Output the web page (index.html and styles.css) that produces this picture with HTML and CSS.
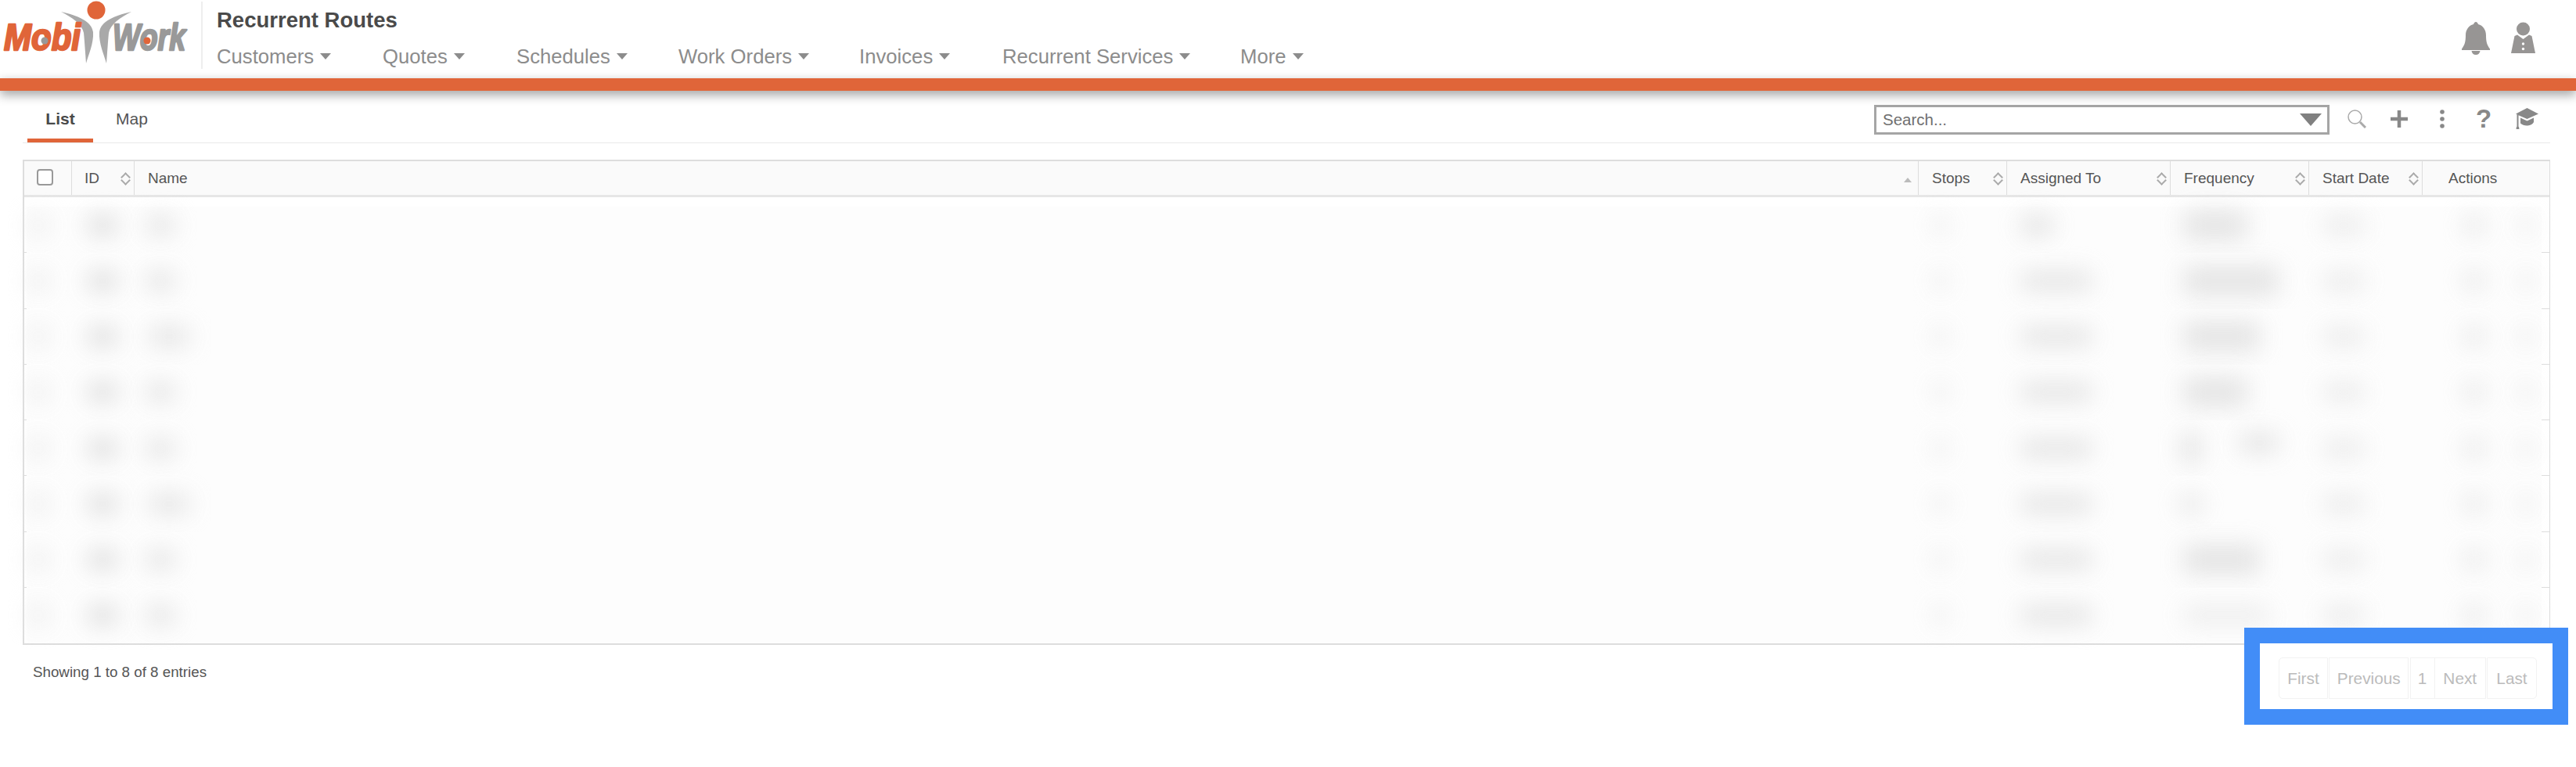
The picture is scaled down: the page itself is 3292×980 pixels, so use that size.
FILE: index.html
```html
<!DOCTYPE html>
<html lang="en">
<head>
<meta charset="utf-8">
<title>Recurrent Routes</title>
<link rel="stylesheet" href="styles.css">
</head>
<body>
<header class="topbar">
  <svg class="logo" viewBox="0 0 240 84" aria-label="MobiWork">
    <path class="logo-body" d="M78 15C100 20 117 27 119 41C120 55 113 70 110 81C109 68 108 52 107 42C105 31 92 22 78 15Z"/>
    <path class="logo-body" d="M168 15C146 20 129 27 127 41C126 55 133 70 136 81C137 68 138 52 139 42C141 31 154 22 168 15Z"/>
    <circle class="logo-head" cx="123" cy="13" r="11.5"/>
    <text class="logo-word logo-mobi" x="5" y="64" textLength="98" lengthAdjust="spacingAndGlyphs">Mobi</text>
    <text class="logo-word logo-work" x="144" y="64" textLength="93" lengthAdjust="spacingAndGlyphs">Work</text>
    <circle class="logo-dot-grey" cx="57" cy="52" r="4.500"/>
    <circle class="logo-dot-orange" cx="188" cy="52" r="4.500"/>
  </svg>
  <div class="title-block">
    <h1 class="page-title">Recurrent Routes</h1>
    <nav class="main-nav">
      <a class="nav-item nav-customers">Customers<i class="caret"></i></a>
      <a class="nav-item nav-quotes">Quotes<i class="caret"></i></a>
      <a class="nav-item nav-schedules">Schedules<i class="caret"></i></a>
      <a class="nav-item nav-orders">Work Orders<i class="caret"></i></a>
      <a class="nav-item nav-invoices">Invoices<i class="caret"></i></a>
      <a class="nav-item nav-services">Recurrent Services<i class="caret"></i></a>
      <a class="nav-item">More<i class="caret"></i></a>
    </nav>
  </div>
  <div class="top-icons">
    <svg class="bell" viewBox="0 0 36 42"><path d="M18 0C19.500 0 20.500 1.500 21 3C27 4.500 31 10 31 17C31 25 32 29 36 34.500V36H0V34.500C4 29 5 25 5 17C5 10 9 4.500 15 3C15.500 1.500 16.500 0 18 0Z"/><path d="M12.500 37H23.500C23 40 21 42 18 42C15 42 13 40 12.500 37Z"/></svg>
    <svg class="person" viewBox="0 0 31 41"><circle cx="15.500" cy="9" r="8.500"/><path d="M4.500 18L8 16.500L15.500 22L23 16.500L26.500 18L31 40H0Z"/><circle class="person-button" cx="15.500" cy="28" r="1.700"/><circle class="person-button" cx="15.500" cy="34.500" r="1.700"/></svg>
  </div>
</header>
<div class="accent-bar"></div>

<main class="content">
  <div class="toolbar">
    <div class="tabs">
      <a class="tab tab-active">List</a>
      <a class="tab">Map</a>
    </div>
    <div class="tools">
      <div class="search-box"><span class="search-text">Search...</span><i class="search-arrow"></i></div>
      <svg class="tool tool-search" viewBox="0 0 24 24"><circle cx="9.500" cy="9.500" r="8.500"/><path class="handle" d="M16 16L23 23"/></svg>
      <svg class="tool tool-plus" viewBox="0 0 24 24"><path d="M12 1V23M1 12H23"/></svg>
      <svg class="tool tool-dots" viewBox="0 0 8 24"><circle cx="4" cy="3" r="2.800"/><circle cx="4" cy="12" r="2.800"/><circle cx="4" cy="21" r="2.800"/></svg>
      <span class="tool-question">?</span>
      <svg class="tool tool-cap" viewBox="0 0 29 27"><path d="M14.500 0L29 7.500L14.500 14L3.500 9.200V24H1.500V8L0 7.500Z"/><path d="M6 12.500L14.500 16.500L23 12.500V18C21 21.500 17.500 22.500 14 22.500C11 22.500 8 21.500 6 19.500Z"/><path d="M1 24H4L4.500 27H0.500Z"/></svg>
    </div>
  </div>

  <section class="data-table">
    <div class="row head-row">
      <div class="cell head"><span class="check"></span></div>
      <div class="cell head">ID<i class="sort"></i></div>
      <div class="cell head">Name<i class="sort-asc"></i></div>
      <div class="cell head">Stops<i class="sort"></i></div>
      <div class="cell head">Assigned To<i class="sort"></i></div>
      <div class="cell head">Frequency<i class="sort"></i></div>
      <div class="cell head">Start Date<i class="sort"></i></div>
      <div class="cell head head-actions">Actions</div>
    </div>

    <div class="row body-row"><div class="cell"><i class="smear s-check"></i></div><div class="cell"><i class="smear s-id"></i></div><div class="cell"><i class="smear s-name"></i></div><div class="cell"><i class="smear s-stops"></i></div><div class="cell"><i class="smear s-short"></i></div><div class="cell"><i class="smear s-freq s-freq-1"></i></div><div class="cell"><i class="smear s-date"></i></div><div class="cell"><i class="smear s-act"></i><i class="smear s-act2"></i></div></div>
    <div class="row body-row"><div class="cell"><i class="smear s-check"></i></div><div class="cell"><i class="smear s-id"></i></div><div class="cell"><i class="smear s-name"></i></div><div class="cell"><i class="smear s-stops"></i></div><div class="cell"><i class="smear s-long"></i></div><div class="cell"><i class="smear s-freq s-freq-2"></i></div><div class="cell"><i class="smear s-date"></i></div><div class="cell"><i class="smear s-act"></i><i class="smear s-act2"></i></div></div>
    <div class="row body-row"><div class="cell"><i class="smear s-check"></i></div><div class="cell"><i class="smear s-id"></i></div><div class="cell"><i class="smear s-name-wide"></i></div><div class="cell"><i class="smear s-stops"></i></div><div class="cell"><i class="smear s-long"></i></div><div class="cell"><i class="smear s-freq s-freq-3"></i></div><div class="cell"><i class="smear s-date"></i></div><div class="cell"><i class="smear s-act"></i><i class="smear s-act2"></i></div></div>
    <div class="row body-row"><div class="cell"><i class="smear s-check"></i></div><div class="cell"><i class="smear s-id"></i></div><div class="cell"><i class="smear s-name"></i></div><div class="cell"><i class="smear s-stops"></i></div><div class="cell"><i class="smear s-long"></i></div><div class="cell"><i class="smear s-freq s-freq-1"></i></div><div class="cell"><i class="smear s-date"></i></div><div class="cell"><i class="smear s-act"></i><i class="smear s-act2"></i></div></div>
    <div class="row body-row"><div class="cell"><i class="smear s-check"></i></div><div class="cell"><i class="smear s-id"></i></div><div class="cell"><i class="smear s-name"></i></div><div class="cell"><i class="smear s-stops"></i></div><div class="cell"><i class="smear s-long"></i></div><div class="cell"><i class="smear s-split-a"></i><i class="smear s-split-b"></i></div><div class="cell"><i class="smear s-date"></i></div><div class="cell"><i class="smear s-act"></i><i class="smear s-act2"></i></div></div>
    <div class="row body-row"><div class="cell"><i class="smear s-check"></i></div><div class="cell"><i class="smear s-id"></i></div><div class="cell"><i class="smear s-name-wide"></i></div><div class="cell"><i class="smear s-stops"></i></div><div class="cell"><i class="smear s-long"></i></div><div class="cell"><i class="smear s-freq-thin"></i></div><div class="cell"><i class="smear s-date"></i></div><div class="cell"><i class="smear s-act"></i><i class="smear s-act2"></i></div></div>
    <div class="row body-row"><div class="cell"><i class="smear s-check"></i></div><div class="cell"><i class="smear s-id"></i></div><div class="cell"><i class="smear s-name"></i></div><div class="cell"><i class="smear s-stops"></i></div><div class="cell"><i class="smear s-long"></i></div><div class="cell"><i class="smear s-freq s-freq-3"></i></div><div class="cell"><i class="smear s-date"></i></div><div class="cell"><i class="smear s-act"></i><i class="smear s-act2"></i></div></div>
    <div class="row body-row"><div class="cell"><i class="smear s-check"></i></div><div class="cell"><i class="smear s-id"></i></div><div class="cell"><i class="smear s-name"></i></div><div class="cell"><i class="smear s-stops"></i></div><div class="cell"><i class="smear s-long"></i></div><div class="cell"><i class="smear s-freq-faint"></i></div><div class="cell"><i class="smear s-date"></i></div><div class="cell"><i class="smear s-act"></i><i class="smear s-act2"></i></div></div>
  </section>

  <footer class="table-footer">
    <div class="entries">Showing 1 to 8 of 8 entries</div>
    <div class="highlight">
      <div class="pager">
        <a class="page page-first">First</a>
        <a class="page page-prev">Previous</a>
        <a class="page page-num">1</a>
        <a class="page page-next">Next</a>
        <a class="page page-last">Last</a>
      </div>
    </div>
  </footer>
</main>
</body>
</html>
```

FILE: styles.css
```css
* { box-sizing: border-box; }
html, body { margin: 0; padding: 0; background: #fff; }
body { width: 3292px; height: 980px; overflow: hidden; font-family: "Liberation Sans", Arial, sans-serif; color: #555; }
i { font-style: normal; }

.topbar { height: 100px; display: flex; align-items: flex-start; background: #fff; }
.logo { width: 240px; height: 84px; flex: none; overflow: visible; }
.logo-body { fill: #a9a9a9; }
.logo-head { fill: #e06539; }
.logo-word { font-family: "Liberation Sans", sans-serif; font-weight: 700; font-style: italic; font-size: 48px; stroke-width: 2.500px; stroke-linejoin: round; }
.logo-mobi { fill: #e06539; stroke: #e06539; }
.logo-work { fill: #999; stroke: #999; }
.logo-dot-grey { fill: #999; }
.logo-dot-orange { fill: #e06539; }

.title-block { margin: 2px 0 0 17px; padding: 11px 0 0 18px; height: 86px; border-left: 2px solid #eee; }
.page-title { margin: 0; font-size: 27.500px; line-height: 26px; font-weight: 700; color: #4a4a4a; }
.main-nav { display: flex; margin-top: 19px; }
.nav-item { font-size: 25.700px; line-height: 28px; color: #8c8c8c; display: flex; align-items: center; white-space: nowrap; }
.caret { width: 0; height: 0; margin-left: 8px; border-left: 7.500px solid transparent; border-right: 7.500px solid transparent; border-top: 8px solid #8c8c8c; }
.nav-customers { width: 212px; }
.nav-quotes { width: 171px; }
.nav-schedules { width: 207px; }
.nav-orders { width: 231px; }
.nav-invoices { width: 183px; }
.nav-services { width: 304px; }

.top-icons { margin-left: auto; margin-right: 52px; margin-top: 28px; display: flex; gap: 27px; }
.bell { width: 36px; height: 42px; fill: #979594; }
.person { width: 31px; height: 41px; fill: #979594; }
.person-button { fill: #fff; }

.accent-bar { height: 16px; background: #e06539; box-shadow: 0 5px 14px rgba(0, 0, 0, .38); position: relative; }

.content { padding: 0 33px 0 29px; }
.toolbar { height: 67px; display: flex; justify-content: space-between; border-bottom: 1px solid #eaeaea; }
.tabs { display: flex; padding-left: 6px; }
.tab { font-size: 21px; line-height: 24px; padding: 24px 0 0; color: #555; }
.tab-active { width: 84px; text-align: center; margin-right: 29px; font-weight: 700; color: #4a4a4a; border-bottom: 5px solid #e06539; }

.tools { display: flex; align-items: flex-start; padding: 18px 15px 0 0; }
.search-box { width: 582px; height: 38px; border: 3px solid #a5a5a5; display: flex; align-items: center; justify-content: space-between; padding: 0 7px 0 8px; }
.search-text { font-size: 20.500px; color: #6f6f6f; }
.search-arrow { width: 0; height: 0; border-left: 14px solid transparent; border-right: 14px solid transparent; border-top: 16px solid #808080; }
.tool { flex: none; }
.tool-search { width: 24px; height: 24px; margin: 6px 0 0 23px; fill: none; stroke: #aaa; stroke-width: 1.500; }
.tool-search .handle { stroke-width: 3; }
.tool-plus { width: 24px; height: 24px; margin: 6px 0 0 30px; fill: none; stroke: #888; stroke-width: 4.500; }
.tool-dots { width: 8px; height: 24px; margin: 6px 0 0 39px; fill: #888; }
.tool-question { width: 20px; margin: 0 0 0 39px; font-size: 33px; line-height: 36px; font-weight: 700; color: #888; text-align: center; }
.tool-cap { width: 29px; height: 27px; margin: 4px 0 0 31px; fill: #888; }

.data-table { margin-top: 21px; width: 3230px; border: 1px solid #ddd; border-top-width: 2px; border-bottom-width: 2px; border-left-width: 2px; position: relative; }
.row { display: grid; grid-template-columns: 61px 80px 2280px 113px 209px 177px 145px 1fr; }
.head-row { height: 46px; background: #fafafa; border-bottom: 3px solid #e6e6e6; }
.cell { position: relative; display: flex; align-items: center; }
.head { padding-left: 17px; font-size: 19px; color: #555; border-right: 1px solid #ddd; }
.head:last-child { border-right: 0; }
.head-actions { padding-left: 33px; }
.head:first-child, .head:nth-child(2) { padding-left: 16px; }
.check { width: 21px; height: 21px; margin-top: -2px; border: 2px solid #999; border-radius: 4px; background: #fff; }
.sort { position: absolute; right: 6px; top: 14px; width: 12px; height: 16px; }
.sort::before, .sort::after { content: ""; position: absolute; left: 2.500px; width: 7px; height: 7px; border: solid #aaa; border-width: 2px 0 0 2px; }
.sort::before { top: 1.500px; transform: rotate(45deg); }
.sort::after { bottom: 1.500px; transform: rotate(225deg); }
.sort-asc { position: absolute; right: 8px; top: 21px; width: 0; height: 0; border-left: 5.500px solid transparent; border-right: 5.500px solid transparent; border-bottom: 6px solid #bbb; }

.body-row { height: 71.250px; position: relative; background: linear-gradient(#fdfdfd, #fdfdfd) 3px 0 / calc(100% - 13px) 100% no-repeat #fff; }
.body-row:nth-child(2) { background-position: 3px 12px; }
.body-row::before { content: ""; position: absolute; left: 0; bottom: 0; width: 3px; height: 1px; background: #ddd; }
.body-row::after { content: ""; position: absolute; right: 0; bottom: 0; width: 10px; height: 1px; background: #ddd; }
.body-row:last-child::before, .body-row:last-child::after { display: none; }
.smear { display: block; flex: none; height: 24px; background: #d6d6d6; filter: blur(15px); opacity: .85; }
.s-check { width: 24px; margin-left: 6px; background: #e9e9e9; }
.s-id { width: 36px; margin-left: 21px; }
.s-name { width: 36px; margin-left: 15px; background: #dfdfdf; }
.s-name-wide { width: 50px; margin-left: 19px; background: #dfdfdf; }
.s-stops { width: 16px; margin-left: 20px; background: #e8e8e8; }
.s-short { width: 40px; margin-left: 18px; background: #dcdcdc; }
.s-long { width: 90px; margin-left: 18px; background: #dfdfdf; }
.s-freq { height: 38px; margin-left: 16px; background: #e0e0e0; }
.s-freq-1 { width: 82px; }
.s-freq-2 { width: 122px; }
.s-freq-3 { width: 98px; }
.s-split-a { width: 26px; height: 40px; margin-left: 13px; background: #e0e0e0; }
.s-split-b { width: 50px; margin: -14px 0 0 49px; background: #dfdfdf; }
.s-freq-thin { width: 30px; margin-left: 11px; background: #e4e4e4; }
.s-freq-faint { width: 110px; margin-left: 16px; background: #eaeaea; }
.s-date { width: 52px; margin-left: 18px; background: #e8e8e8; }
.s-act { width: 26px; margin-left: 53px; background: #e4e4e4; }
.s-act2 { width: 12px; margin-left: 47px; background: #e1e1e1; }

.table-footer { display: flex; justify-content: space-between; align-items: flex-start; width: 3253px; }
.entries { margin: 24px 0 0 13px; font-size: 18.750px; line-height: 22px; color: #555; }
.highlight { position: relative; margin-top: -22px; width: 414px; height: 124px; border: 20px solid #428df7; background: #fff; padding: 18px 20px 0 24px; }
.pager { display: flex; justify-content: space-between; height: 53px; }
.page { display: flex; align-items: center; justify-content: center; height: 53px; font-size: 20.800px; color: #bbb; background: #fff; border: 1px solid #f2f2f2; }
.page-first { width: 63px; border-radius: 5px 0 0 5px; }
.page-prev { width: 102px; }
.page-num { width: 32px; }
.page-next { width: 66px; margin-left: -2px; }
.page-last { width: 64px; border-radius: 0 5px 5px 0; }
```
